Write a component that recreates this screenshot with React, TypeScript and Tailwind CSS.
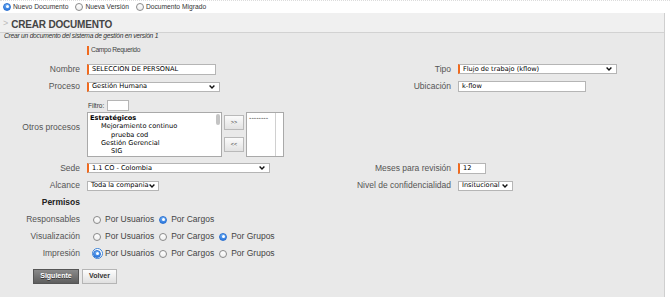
import React from "react";

const ctl = "font-['DejaVu_Sans',Verdana,sans-serif] text-[6.6px] text-black";

function Radio({ on, focus }: { on?: boolean; focus?: boolean }) {
  if (on) {
    return (
      <span
        className={
          "inline-flex shrink-0 items-center justify-center rounded-full " +
          (focus ? "h-[11px] w-[11px] border-[1.5px] border-[#3b82d6] bg-white" : "h-[8px] w-[8px]")
        }
      >
        <span className="flex h-[8px] w-[8px] items-center justify-center rounded-full border border-[#2a6fd0] bg-gradient-to-b from-[#6fb0f5] to-[#2f7be0]">
          <span className="h-[3px] w-[3px] rounded-full bg-white" />
        </span>
      </span>
    );
  }
  return (
    <span className="inline-block h-[8px] w-[8px] shrink-0 rounded-full border border-[#8a8a8a] bg-gradient-to-b from-white to-[#eeeeee]" />
  );
}

function Chevron() {
  return (
    <svg width="6" height="4" viewBox="0 0 6 4" className="shrink-0">
      <path d="M0.6 0.6 L3 3 L5.4 0.6" fill="none" stroke="#111" strokeWidth="1.4" />
    </svg>
  );
}

function Select({ w, text, req }: { w: string; text: string; req?: boolean }) {
  return (
    <div
      className={
        "flex h-[10px] items-center justify-between border border-[#b5b5b5] bg-white pl-[3px] pr-[4px] " +
        w +
        (req ? " border-l-2 border-l-[#f06a1e]" : "")
      }
    >
      <span className={ctl + " leading-none whitespace-nowrap"}>{text}</span>
      <Chevron />
    </div>
  );
}

function Input({ w, text, req }: { w: string; text: string; req?: boolean }) {
  return (
    <div
      className={
        "flex h-[11px] items-center border border-[#b5b5b5] bg-white pl-[3px] " +
        w +
        (req ? " border-l-2 border-l-[#f06a1e]" : "")
      }
    >
      <span className={ctl + " leading-none whitespace-nowrap"}>{text}</span>
    </div>
  );
}

function Label({ children }: { children: React.ReactNode }) {
  return <div className="text-right text-[8.5px] text-[#555] whitespace-nowrap">{children}</div>;
}

const row = "grid grid-cols-[80px_243px_114px_1fr] gap-x-[7px] items-center";

function PermRow({ label, sel, grupos }: { label: string; sel: number; grupos?: boolean }) {
  const opts = grupos ? ["Por Usuarios", "Por Cargos", "Por Grupos"] : ["Por Usuarios", "Por Cargos"];
  return (
    <div className={row + " h-[17px]"}>
      <Label>{label}</Label>
      <div className="col-span-3 flex items-center pl-[6px] text-[8.5px] text-[#444]">
        {opts.map((o, i) => (
          <div key={o} className="mr-[5px] flex items-center gap-[4px]">
            <span className="flex w-[8px] items-center justify-center">
              <Radio on={i === sel} focus={label === "Impresión" && i === sel} />
            </span>
            <span>{o}</span>
          </div>
        ))}
      </div>
    </div>
  );
}

export default function App() {
  return (
    <div className="h-[297px] w-[670px] overflow-hidden bg-white font-['Liberation_Sans',Arial,sans-serif]">
      {/* doc type switch */}
      <div className="flex h-[13px] items-end gap-[7px] border-t border-dotted border-[#dcdcdc] pb-[1px] pl-[3px] text-[6.7px] text-[#333]">
        <div className="flex items-center gap-[2px]">
          <Radio on />
          <span>Nuevo Documento</span>
        </div>
        <div className="flex items-center gap-[2px]">
          <Radio />
          <span>Nueva Versión</span>
        </div>
        <div className="flex items-center gap-[2px]">
          <Radio />
          <span>Documento Migrado</span>
        </div>
      </div>

      <div className="h-[284px] w-[665px] border-r border-[#cfcfcf] bg-[#e9e9e9]">
        <div className="flex h-[20px] items-center gap-[3px] border-b border-[#d2d2d2] bg-[#f0f0f0] pl-[3px] pt-[3px]">
          <span className="text-[9px] text-[#bbb]">&gt;</span>
          <span className="text-[10px] font-bold tracking-[-0.2px] text-[#444]">CREAR DOCUMENTO</span>
        </div>
        <div className="h-[8px] whitespace-nowrap pl-[4px] text-[6.7px] italic leading-[6px] tracking-[-0.25px] text-[#333]">
          Crear un documento del sistema de gestión en versión 1
        </div>

        <div className="flex flex-col">
          <div className={row + " h-[19px]"}>
            <div />
            <div className="flex items-center gap-[2px]">
              <span className="h-[9px] w-[2px] bg-[#f06a1e]" />
              <span className="whitespace-nowrap text-[6.7px] tracking-[-0.35px] text-[#444]">Campo Requerido</span>
            </div>
          </div>

          <div className={row + " h-[18px]"}>
            <Label>Nombre</Label>
            <Input w="w-[129px]" text="SELECCION DE PERSONAL" req />
            <Label>Tipo</Label>
            <Select w="w-[159px]" text="Flujo de trabajo (kflow)" req />
          </div>

          <div className={row + " h-[17px]"}>
            <Label>Proceso</Label>
            <Select w="w-[133px]" text="Gestión Humana" req />
            <Label>Ubicación</Label>
            <Input w="w-[128px]" text="k-flow" />
          </div>

          <div className={row + " h-[64px]"}>
            <Label>Otros procesos</Label>
            <div className="flex flex-col pt-[3px]">
              <div className="mb-[1px] flex h-[11px] items-center gap-[3px] pl-[1px]">
                <span className="text-[6.5px] text-[#333]">Filtro:</span>
                <span className="h-[11px] w-[22px] border border-[#b5b5b5] bg-white" />
              </div>
              <div className="flex items-start">
                <div className={"relative h-[45px] w-[135px] border border-[#a9a9a9] bg-white pl-[2px] pt-[1px] leading-[8.3px] " + ctl}>
                  <div className="font-bold">Estratégicos</div>
                  <div className="pl-[11px]">Mejoramiento continuo</div>
                  <div className="pl-[21px]">prueba cod</div>
                  <div className="pl-[11px]">Gestión Gerencial</div>
                  <div className="pl-[21px]">SIG</div>
                  <span className="absolute right-[1px] top-[1px] h-[11px] w-[4px] rounded-full bg-[#c4c4c4]" />
                </div>
                <div className="ml-[2px] flex flex-col gap-[7px] pt-[3px]">
                  <button className="h-[15px] w-[20px] border border-[#b9b9b9] bg-gradient-to-b from-[#fbfbfb] to-[#e2e2e2] text-[5.5px] text-[#333]">
                    &gt;&gt;
                  </button>
                  <button className="h-[15px] w-[20px] border border-[#b9b9b9] bg-gradient-to-b from-[#fbfbfb] to-[#e2e2e2] text-[5.5px] text-[#333]">
                    &lt;&lt;
                  </button>
                </div>
                <div className="ml-[2px] flex h-[45px] w-[38px] border border-[#a9a9a9] bg-white">
                  <div className={"flex-1 pl-[2px] pt-[1px] leading-[8px] " + ctl}>--------</div>
                  <div className="w-[8px] border-l border-[#d0d0d0]" />
                </div>
              </div>
            </div>
          </div>

          <div className={row + " h-[18px]"}>
            <Label>Sede</Label>
            <Select w="w-[183px]" text="1.1 CO - Colombia" req />
            <Label>Meses para revisión</Label>
            <Input w="w-[28px]" text="12" req />
          </div>

          <div className={row + " h-[17px]"}>
            <Label>Alcance</Label>
            <Select w="w-[72px]" text="Toda la compania" />
            <Label>Nivel de confidencialidad</Label>
            <Select w="w-[55px]" text="Insitucional" />
          </div>

          <div className={row + " h-[17px]"}>
            <div className="text-right text-[8.5px] font-bold text-[#222]">Permisos</div>
          </div>

          <PermRow label="Responsables" sel={1} />
          <PermRow label="Visualización" sel={2} grupos />
          <PermRow label="Impresión" sel={0} grupos />

          <div className="mt-[7px] flex gap-[3px] pl-[33px]">
            <button className="h-[15px] w-[46px] border border-[#555] bg-gradient-to-b from-[#8a8a8a] to-[#5e5e5e] text-[7px] font-bold text-white [text-shadow:0_1px_0_#333]">
              Siguiente
            </button>
            <button className="h-[15px] w-[35px] border border-[#b5b5b5] bg-gradient-to-b from-[#fdfdfd] to-[#e0e0e0] text-[7px] font-bold text-[#333]">
              Volver
            </button>
          </div>
        </div>
      </div>
    </div>
  );
}
